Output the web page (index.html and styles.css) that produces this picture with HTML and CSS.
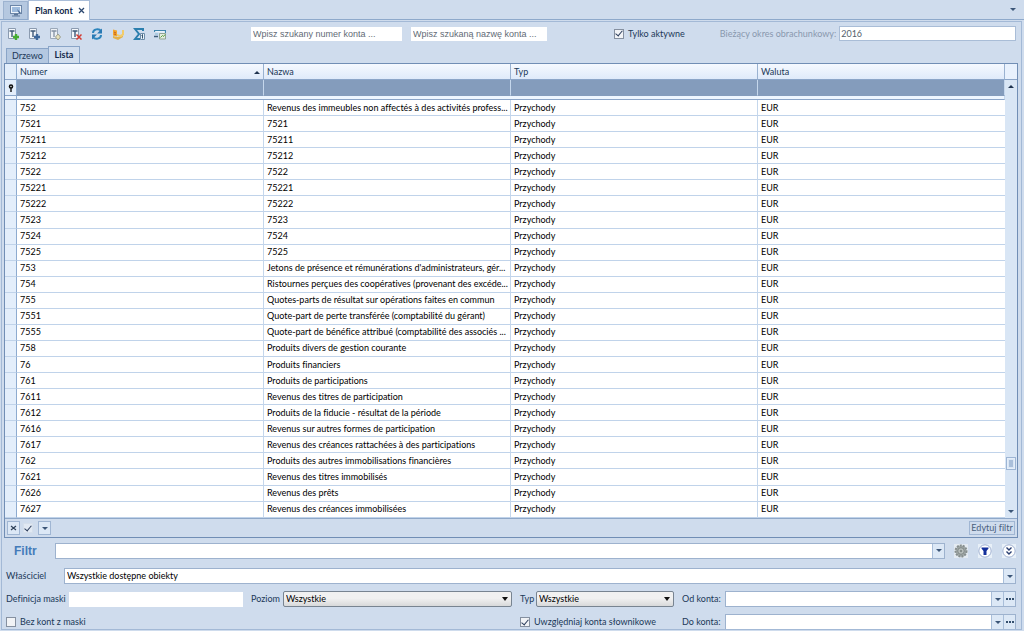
FILE: index.html
```html
<!DOCTYPE html>
<html lang="pl">
<head>
<meta charset="utf-8">
<title>Plan kont</title>
<link rel="stylesheet" href="styles.css">
</head>
<body>
<header class="tabstrip">
  <button class="home-tab" aria-label="Pulpit"><svg width="14" height="12" viewBox="0 0 14 12"><rect x="1.5" y=".5" width="11" height="8" fill="#edf4fb" stroke="#6c86a8"/><path d="M3 2h8v5H3z" fill="#9ebbdd"/><path d="M5 9h4v1.500H5z" fill="#5d7698"/><path d="M3 11h8" stroke="#5f7b9f"/><path d="M8 4l4 4-2 .2z" fill="#3f5f8c"/></svg></button>
  <div class="page-tab"><span>Plan kont</span><button class="close" aria-label="Zamknij"><svg width="7" height="7" viewBox="0 0 7 7"><path d="M1 1l5 5M6 1L1 6" stroke="#2b476f" stroke-width="1.300"/></svg></button></div>
  <button class="strip-menu" aria-label="Lista kart"><i class="arrow down"></i></button>
</header>
<main class="panel">
  <div class="toolbar">
    <div class="tools">
      <button aria-label="Dodaj"><svg viewBox="0 0 12 12"><path d="M1.500.5h7v10h-7z" fill="#f3f7fb" stroke="#8b9bb0"/><path d="M2.500 3h5M5 3v6" stroke="#3e5878" stroke-width="1.400"/><path d="M9 6v6M6 9h6" stroke="#45ad32" stroke-width="2.400"/></svg></button>
      <button aria-label="Dodaj podrzędne"><svg viewBox="0 0 12 12"><path d="M1.500.5h7v10h-7z" fill="#f3f7fb" stroke="#8b9bb0"/><path d="M2.500 3h5M5 3v6" stroke="#3e5878" stroke-width="1.400"/><path d="M9 6v6M6 9h6" stroke="#3e689c" stroke-width="2.400"/></svg></button>
      <button aria-label="Edytuj"><svg viewBox="0 0 12 12"><path d="M1.500.5h7v10h-7z" fill="#edf1f5" stroke="#9aa8b9"/><path d="M2.500 3h5M5 3v6" stroke="#8291a2" stroke-width="1.300"/><path d="M9 6l2.500 3L9 12 6.500 9z" fill="#e9e2bb" stroke="#999c8d"/></svg></button>
      <button aria-label="Usuń"><svg viewBox="0 0 12 12"><path d="M1.500.5h7v10h-7z" fill="#f3f7fb" stroke="#8b9bb0"/><path d="M2.500 3h5M5 3v6" stroke="#3e5878" stroke-width="1.400"/><path d="M6.500 6.500l5 5M11.500 6.500l-5 5" stroke="#d43b32" stroke-width="1.500"/></svg></button>
      <button aria-label="Odśwież"><svg viewBox="0 0 12 12"><path d="M2 5c0-4 6-5 8-2M10 7c0 4-6 5-8 2" fill="none" stroke="#2d85bd" stroke-width="2"/><path d="M11 .5v5H6zM1 11.500v-5h5z" fill="#2879b3"/></svg></button>
      <button aria-label="Bilans"><svg viewBox="0 0 12 12"><path d="M1 1.500l4 1v6L1 7.500z" fill="#f3a52d"/><path d="M1 8l4 1 6-1v1l-5 3-5-2z" fill="#e3b14a"/><path d="M10 2h2v5l-3 2-4-1V6l3 1 2-1z" fill="#f2cc6a"/><path d="M2 4l2 1M2 6l2 .500" stroke="#c4621f"/></svg></button>
      <button aria-label="Suma"><svg viewBox="0 0 12 12"><path d="M10 3V1H2l4 5-4 5h5" fill="none" stroke="#2c7fae" stroke-width="2"/><path d="M7.500 5.500h4v6h-4z" fill="#eaf3fa" stroke="#6d8ca9"/><path d="M8.500 7.500l1-1v4" fill="none" stroke="#35536e"/></svg></button>
      <button aria-label="Obroty"><svg viewBox="0 0 12 12"><path d="M.5 4V2.500h11V5" fill="#e9f2fa" stroke="#3f86ad" stroke-width="1.200"/><path d="M0 8.500h4" stroke="#3d5d7b" stroke-width="1.500"/><path d="M1 6h3" stroke="#84b9d7"/><path d="M5.500 5.500h6V11h-6z" fill="#e3ecdf" stroke="#8fa493"/><path d="M6.500 9.500l2-2 1 1 1.500-2" fill="none" stroke="#5aa13e"/></svg></button>
    </div>
    <input class="search wide" type="text" aria-label="Numer konta" placeholder="Wpisz szukany numer konta ...">
    <input class="search" type="text" aria-label="Nazwa konta" placeholder="Wpisz szukaną nazwę konta ...">
    <label class="check active"><input type="checkbox" checked><span>Tylko aktywne</span></label>
    <label class="muted" for="period">Bieżący okres obrachunkowy:</label>
    <input class="period" id="period" type="text" value="2016" readonly>
  </div>
  <nav class="views"><button>Drzewo</button><button class="selected">Lista</button></nav>
  <section class="grid">
    <div class="grid-body">
      <div class="table-wrap">
      <table>
        <colgroup><col class="mark"><col><col><col><col></colgroup>
        <thead>
          <tr class="head"><th></th><th>Numer<i class="arrow up"></i></th><th>Nazwa</th><th>Typ</th><th>Waluta</th></tr>
          <tr class="filter-row"><td><svg width="6" height="8" viewBox="0 0 6 8"><circle cx="3" cy="2.500" r="1.500" fill="#fff" stroke="#111" stroke-width="1.600"/><path d="M3 4v4" stroke="#111" stroke-width="1.400"/></svg></td><td></td><td></td><td></td><td></td></tr>
          <tr class="gap"><td></td><td colspan="4"></td></tr>
        </thead>
        <tbody id="rows"></tbody>
      </table>
      </div>
      <div class="scroll"><div class="corner"></div><button aria-label="W górę"><i class="arrow up"></i></button><div class="track"><div class="thumb"></div></div><button aria-label="W dół"><i class="arrow down"></i></button></div>
    </div>
    <div class="grid-foot">
      <button class="box" aria-label="Wyczyść"><svg width="7" height="6" viewBox="0 0 7 6"><path d="M1 1l5 4M6 1L1 5" stroke="#2d4058" stroke-width="1.200"/></svg></button>
      <label class="check plain"><input type="checkbox" checked aria-label="Filtr aktywny"></label>
      <button class="box" aria-label="Ostatnie filtry"><i class="arrow down"></i></button>
      <button class="edit">Edytuj filtr</button>
    </div>
  </section>
  <section class="filters">
    <div class="line first">
      <label class="title" for="filter">Filtr</label>
      <div class="combo"><input id="filter" type="text"><button aria-label="Rozwiń"><i class="arrow down"></i></button></div>
      <div class="actions">
        <button aria-label="Ustawienia"><svg viewBox="0 0 14 14"><path d="M0 0h14v14H0z" fill="#e4ebf2"/><circle cx="7" cy="7" r="5.500" fill="#a3aaa9" stroke="#868e8e" stroke-width="2" stroke-dasharray="2 1"/><circle cx="7" cy="7" r="3.300" fill="#b9bfbd" stroke="#7f8887"/><circle cx="7" cy="7" r="1.200" fill="#848c8a"/></svg></button>
        <button aria-label="Filtruj"><svg viewBox="0 0 14 14"><path d="M0 0h14v14H0z" fill="#e8f0f8"/><circle cx="7" cy="7" r="6.200" fill="#fff" stroke="#9badd0"/><path d="M3.500 3.500h7v1L8.500 7v4h-3V7l-2-2.500z" fill="#14309b"/></svg></button>
        <button aria-label="Zwiń"><svg viewBox="0 0 14 14"><path d="M0 0h14v14H0z" fill="#e8f0f8"/><circle cx="7" cy="7" r="6.200" fill="#fff" stroke="#9badd0"/><path d="M4.500 3.500L7 6l2.500-2.500M4.500 7.500L7 10l2.500-2.500" fill="none" stroke="#293d70" stroke-width="1.400"/></svg></button>
      </div>
    </div>
    <div class="line owner">
      <label for="owner">Właściciel</label>
      <div class="combo"><input id="owner" type="text" value="Wszystkie dostępne obiekty"><button aria-label="Rozwiń"><i class="arrow down"></i></button></div>
    </div>
    <div class="fields">
      <label for="mask">Definicja maski</label>
      <input class="mask" id="mask" type="text">
      <label class="spaced" for="level">Poziom</label>
      <div class="select"><select id="level"><option>Wszystkie</option></select></div>
      <label class="spaced" for="type">Typ</label>
      <div class="select"><select id="type"><option>Wszystkie</option></select></div>
      <label class="spaced" for="from">Od konta:</label>
      <div class="combo"><input id="from" type="text"><button aria-label="Rozwiń"><i class="arrow down"></i></button><button aria-label="Wybierz"><i class="dots"></i></button></div>
      <label class="check without"><input type="checkbox"><span>Bez kont z maski</span></label>
      <label class="check dictionary"><input type="checkbox" checked><span>Uwzględniaj konta słownikowe</span></label>
      <label class="spaced" for="to">Do konta:</label>
      <div class="combo"><input id="to" type="text"><button aria-label="Rozwiń"><i class="arrow down"></i></button><button aria-label="Wybierz"><i class="dots"></i></button></div>
    </div>
  </section>
</main>
<script src="script.js"></script>
</body>
</html>
```
FILE: styles.css
```css
* { box-sizing: border-box; }
body {
  margin: 0;
  height: 100vh;
  display: flex;
  flex-direction: column;
  overflow: hidden;
  background: #cfdced;
  color: #203858;
  font: 9px/12px Lato, "Open Sans", sans-serif;
  font-variant-ligatures: none;
}
button, input, select { font: inherit; font-variant-ligatures: none; color: inherit; margin: 0; padding: 0; border-radius: 0; }
button { display: flex; align-items: center; justify-content: center; border: 0; background: none; }
input[type="text"] { min-width: 0; border: 0; background: #fff; }
svg { display: block; flex: none; }

.arrow { flex: none; width: 0; height: 0; border: 3px solid transparent; }
.arrow.down { border-top: 3px solid #3c5678; border-bottom: 0; }
.arrow.up { border-bottom: 3px solid #203450; border-top: 0; }
.dots { width: 8px; height: 2px; background: repeating-linear-gradient(90deg, #35506f 0 2px, transparent 2px 3px); }

.tabstrip { display: flex; height: 20px; padding-left: 3px; border-bottom: 1px solid #8ea9cb; }
.home-tab { width: 25px; margin-top: 1px; border: 1px solid #9db3d0; border-bottom: 0; background: #b5c8e0; }
.page-tab { display: flex; align-items: center; gap: 5px; height: 20px; padding: 0 4px 0 6px; border: 1px solid #a9bdd8; border-bottom: 0; background: #fff; color: #14294b; font-weight: 700; }
.close { width: 7px; }
.strip-menu { width: 12px; margin: 0 5px 0 auto; }

.panel { flex: 1; min-height: 0; display: flex; flex-direction: column; margin: 1px 2px 1px 1px; border: 1px solid #a3b9d6; }
.toolbar { display: flex; align-items: center; height: 23px; padding: 0 5px 0 5px; flex: none; }
.tools { display: flex; gap: 9px; margin-right: 85px; }
.tools button, .tools svg { width: 12px; height: 12px; }
.search { width: 136px; height: 14px; padding: 0 2px; font: 9px/14px "Liberation Sans", sans-serif; }
.search.wide { width: 151px; margin-right: 9px; }
.search::placeholder { color: #626a75; opacity: 1; }
.check { display: flex; align-items: center; gap: 4px; white-space: nowrap; }
.check input { appearance: none; flex: none; width: 10px; height: 10px; margin: 0; border: 1px solid #8590a0; background: #f1f3f6; display: grid; place-items: center; }
.check input:checked::before { content: ""; width: 3px; height: 6px; margin-top: -2px; border: solid #2b3d5c; border-width: 0 1px 1px 0; transform: rotate(40deg); }
.check.active { margin-left: 67px; margin-right: 35px; }
.muted { color: #8998ad; white-space: nowrap; margin-right: 3px; }
.toolbar .period { flex: 1; height: 15px; padding: 0 1px; border: 1px solid #a9bdd7; color: #555f6c; }

.views { display: flex; align-items: flex-end; height: 18px; flex: none; padding-left: 4px; }
.views button { width: 43px; height: 15px; border: 1px solid #8aa5c8; border-bottom: 0; background: #b4c8e1; }
.views .selected { width: 32px; height: 17px; margin-left: -1px; background: #d1deef; color: #14294b; font-weight: 700; }

.grid { flex: 1; min-height: 0; display: flex; flex-direction: column; margin: 0 3px 0 2px; border: 1px solid #718eb5; }
.grid-body { flex: 1; min-height: 0; display: flex; }
.table-wrap { flex: 1; min-width: 0; }
table { width: 100%; height: 100%; table-layout: fixed; border-collapse: separate; border-spacing: 0; background: #fff; color: #000; }
.mark { width: 12px; }
th, td { padding: 0 2px 0 3px; text-align: left; font-weight: 400; white-space: nowrap; overflow: hidden; border-right: 1px solid #c5d7ec; border-bottom: 1px solid #c0d3ea; line-height: 14px; }
tbody td:last-child { border-right: 0; }
th:first-child, td:first-child { padding: 0 2px; background: #e3eefb; border-right-color: #8dabd0; }
.head { height: 16px; }
th { background: linear-gradient(#f5f9ff, #dfeafa); color: #203858; border-right-color: #9ab2d1; border-bottom-color: #8ba5c8; }
th .arrow { float: right; margin: 6px 1px 0 0; }
.filter-row { height: 16px; }
.filter-row td { background: #849cbc; border-bottom-color: #849cbc; }
.filter-row td:first-child { background: #e3eefb; border-bottom-color: #8ba5c8; }
.filter-row svg { margin: auto; }
.gap { height: 4px; }
.gap td { padding: 0; line-height: 3px; background: #eef6ff; border-bottom-color: #8ba5c8; }

.scroll { width: 12px; display: flex; flex-direction: column; background: #d9e6f5; }
.corner { height: 16px; background: #e8f1fd; border-bottom: 1px solid #8ba5c8; }
.scroll button { height: 13px; }
.track { flex: 1; display: flex; flex-direction: column; }
.track::before { content: ""; flex: 362 1 0; }
.track::after { content: ""; flex: 35 1 0; }
.thumb { height: 13px; margin: 0 1px; border: 1px solid #9db5d4; padding: 2px; background: #aabfda content-box; outline: 1px solid #e5eef9; outline-offset: -2px; }

.grid-foot { display: flex; align-items: center; height: 19px; padding: 0 2px; border-top: 1px solid #8fa8c9; }
.box { width: 13px; height: 14px; border: 1px solid #a0b6d3; background: #dce8f6; }
.check.plain { margin: 0 5px 0 3px; }
.check.plain input { border-color: #d5dfeb; background: #e1e9f3; }
.edit { width: 46px; height: 14px; margin-left: auto; border: 1px solid #a0b6d3; color: #49607e; white-space: nowrap; }

.filters { flex: none; margin-top: 5px; padding: 0 5px 0 4px; display: flex; flex-direction: column; }
.line { display: flex; align-items: center; }
.first { height: 15px; margin-bottom: 10px; }
.title { width: 49px; padding-left: 8px; color: #447bb9; font: 700 12px/14px "Liberation Sans", sans-serif; }
.combo { display: flex; flex: 1; min-width: 0; height: 16px; border: 1px solid #9db2ce; background: #fff; color: #000; }
.combo input { flex: 1; padding: 0 2px; background: none; }
.combo button { width: 12px; border-left: 1px solid #a9bed9; background: #dce8f6; }
.actions { display: flex; gap: 10px; margin-left: 9px; }
.actions button, .actions svg { width: 14px; height: 14px; }
.owner label { width: 58px; }
.fields { display: grid; grid-template-columns: 63px 174fr 40px 229fr 24px 138fr 51px 291fr; grid-template-rows: 16px 14px; row-gap: 8px; margin-top: 7px; align-items: center; white-space: nowrap; overflow: hidden; }
.spaced { padding-left: 8px; }
.mask { height: 15px; width: 100%; }
.select { position: relative; height: 16px; }
.select select { appearance: none; display: block; width: 100%; height: 100%; padding: 0 2px; border: 1px solid #788491; border-radius: 2px; background: linear-gradient(#f1f1f1 45%, #d8d9da); color: #000; }
.select::after { content: ""; position: absolute; right: 4px; top: 6px; border: 3px solid transparent; border-top: 4px solid #111; border-bottom: 0; pointer-events: none; }
.without { grid-column: 1 / 5; }
.dictionary { grid-column: 5 / 7; padding-left: 8px; }
```
FILE: script.js
```javascript
const accounts = [
  ["752", "Revenus des immeubles non affectés à des activités profess..."],
  ["7521", "7521"], ["75211", "75211"], ["75212", "75212"], ["7522", "7522"],
  ["75221", "75221"], ["75222", "75222"], ["7523", "7523"], ["7524", "7524"], ["7525", "7525"],
  ["753", "Jetons de présence et rémunérations d'administrateurs, gér..."],
  ["754", "Ristournes perçues des coopératives (provenant des excéde..."],
  ["755", "Quotes-parts de résultat sur opérations faites en commun"],
  ["7551", "Quote-part de perte transférée (comptabilité du gérant)"],
  ["7555", "Quote-part de bénéfice attribué (comptabilité des associés ..."],
  ["758", "Produits divers de gestion courante"],
  ["76", "Produits financiers"],
  ["761", "Produits de participations"],
  ["7611", "Revenus des titres de participation"],
  ["7612", "Produits de la fiducie - résultat de la période"],
  ["7616", "Revenus sur autres formes de participation"],
  ["7617", "Revenus des créances rattachées à des participations"],
  ["762", "Produits des autres immobilisations financières"],
  ["7621", "Revenus des titres immobilisés"],
  ["7626", "Revenus des prêts"],
  ["7627", "Revenus des créances immobilisées"]
];
const body = document.getElementById("rows");
for (const [number, name] of accounts) {
  const row = body.insertRow();
  for (const text of ["", number, name, "Przychody", "EUR"]) {
    row.insertCell().textContent = text;
  }
}
```
